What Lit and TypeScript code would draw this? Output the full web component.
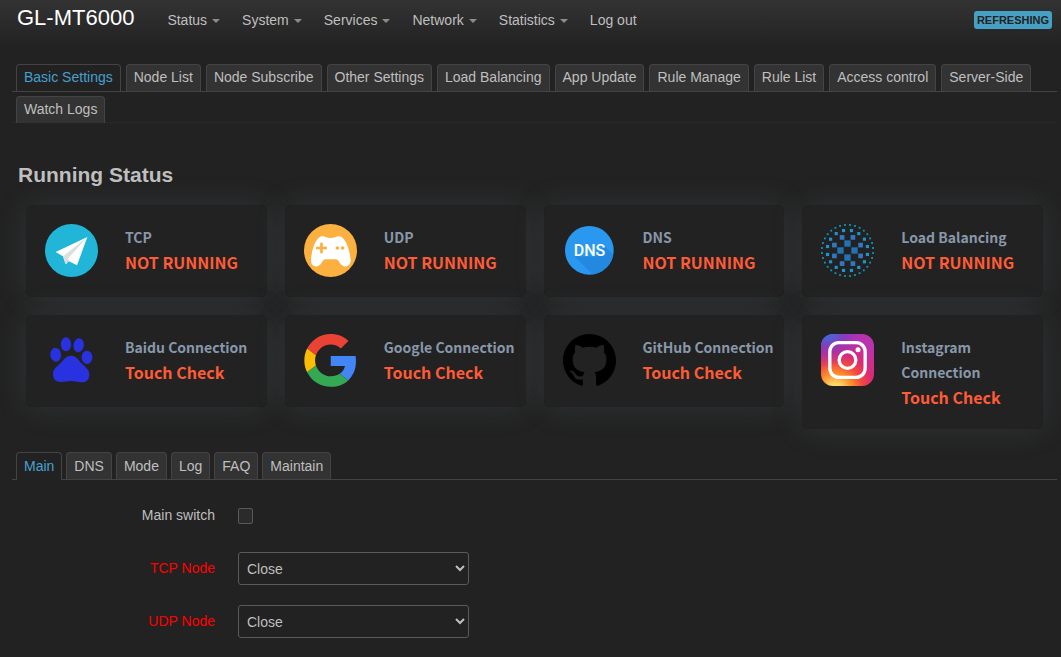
import { LitElement, html, svg, css } from "lit";
import { customElement, state } from "lit/decorators.js";
import { classMap } from "lit/directives/class-map.js";

interface NavItem { label: string; menu: boolean; }
interface StatusCard { name: string; value: string; icon: unknown; check?: boolean; }

const NAV: NavItem[] = [
  { label: "Status", menu: true },
  { label: "System", menu: true },
  { label: "Services", menu: true },
  { label: "Network", menu: true },
  { label: "Statistics", menu: true },
  { label: "Log out", menu: false },
];

const PAGES = [
  "Basic Settings", "Node List", "Node Subscribe", "Other Settings", "Load Balancing", "App Update",
  "Rule Manage", "Rule List", "Access control", "Server-Side", "Watch Logs",
];

const SECTIONS = ["Main", "DNS", "Mode", "Log", "FAQ", "Maintain"];

const plane = svg`
  <circle cx="79.5" cy="79.5" r="79.5" fill="#21b6d7"/>
  <path d="M127 39 32 84 54 97 62 121 72 112 96 124Z" fill="#fff"/>
  <path d="M127 39 54 97 62 121 69 104Z" fill="#dcdfe1"/>
  <path d="M69 104 62 121 72 112Z" fill="#c9cdd0"/>`;

const gamepad = svg`
  <circle cx="79.5" cy="79.5" r="79.5" fill="#fbb040"/>
  <path d="M52 37C62 35 67 42 80 42S98 35 108 37C128 43 138 85 140 108C141 130 118 134 107 116Q102 106 96 106H64Q58 106 53 116C42 134 20 130 21 108C22 85 32 43 52 37Z" fill="#fff"/>
  <path d="M36 72H69M52.500 56V88" stroke="#fbb040" stroke-width="8"/>
  <circle cx="100" cy="72" r="5.500" fill="#fbb040"/><circle cx="116" cy="72" r="5.500" fill="#fbb040"/>`;

const dns = svg`
  <defs><clipPath id="disc"><circle cx="79" cy="79" r="73"/></clipPath></defs>
  <circle cx="79" cy="79" r="73" fill="#2b98f0"/>
  <path d="M34 97 94 157H159V100L124 65 98 98Z" fill="#2389e0" clip-path="url(#disc)"/>
  <text class="glyph" x="79.500" y="97" text-anchor="middle">DNS</text>`;

/** Evenly spaced squares on a circle, shifted by half a step from the axes. */
function ring(count: number, radius: number, size: number, fill: string, shift = 0.5) {
  return Array.from({ length: count }, (_, i) => {
    const a = ((i + shift) * 2 * Math.PI) / count;
    return svg`<rect x=${79.5 + radius * Math.cos(a) - size / 2} y=${79.5 + radius * Math.sin(a) - size / 2}
      width=${size} height=${size} fill=${fill}/>`;
  });
}

const balance = svg`
  ${ring(4, 21, 19, "#2273b4", 0)}
  ${ring(8, 42.5, 14, "#2f78c4")}
  ${ring(16, 61, 9.5, "#1d94cf")}
  ${ring(32, 77, 5.5, "#1295b5")}`;

const paw = svg`<g transform="translate(-135 -102)" fill="#2932e1">
  <ellipse cx="198" cy="133" rx="15.500" ry="21"/>
  <ellipse cx="236" cy="136" rx="15.500" ry="21" transform="rotate(10 236 136)"/>
  <ellipse cx="167" cy="164" rx="16" ry="21" transform="rotate(-6 167 164)"/>
  <ellipse cx="261" cy="172" rx="16" ry="20"/>
  <path d="M213 167C225 167 233 175 240 185C250 197 268 205 268 224C268 240 257 248 243 247C231 246 225 243 213 243S195 246 182 246C168 246 159 238 159 222C159 206 174 198 184 187C192 177 200 167 213 167Z"/></g>`;

const google = svg`<g transform="translate(1) scale(3.3)">
  <path fill="#ea4335" d="M24 9.500c3.540 0 6.710 1.220 9.210 3.600l6.850-6.850C35.900 2.380 30.470 0 24 0 14.620 0 6.510 5.380 2.560 13.220l7.980 6.190C12.430 13.720 17.740 9.500 24 9.500z"/>
  <path fill="#4285f4" d="M46.980 24.550c0-1.570-.15-3.090-.38-4.550H24v9.020h12.940c-.58 2.960-2.260 5.480-4.780 7.180l7.730 6c4.510-4.180 7.090-10.360 7.090-17.650z"/>
  <path fill="#fbbc05" d="M10.530 28.590c-.48-1.450-.76-2.990-.76-4.590s.27-3.140.76-4.590l-7.980-6.190C.92 16.460 0 20.120 0 24c0 3.880.92 7.540 2.560 10.780l7.970-6.190z"/>
  <path fill="#34a853" d="M24 48c6.480 0 11.930-2.130 15.890-5.810l-7.730-6c-2.150 1.450-4.920 2.300-8.160 2.300-6.260 0-11.570-4.220-13.470-9.910l-7.980 6.190C6.510 42.620 14.620 48 24 48z"/></g>`;

const github = svg`<path fill="#000" transform="scale(9.94)" d="M8 0C3.580 0 0 3.580 0 8c0 3.540 2.290 6.530 5.470 7.590.4.070.55-.17.55-.38 0-.19-.01-.82-.01-1.490-2.010.37-2.530-.49-2.690-.94-.09-.23-.48-.94-.82-1.130-.28-.15-.68-.52-.01-.53.63-.01 1.080.58 1.230.82.72 1.210 1.870.87 2.330.66.07-.52.28-.87.51-1.070-1.780-.2-3.640-.89-3.640-3.950 0-.87.31-1.590.82-2.150-.08-.2-.36-1.020.08-2.120 0 0 .67-.21 2.200.82.64-.18 1.320-.27 2-.27.68 0 1.360.09 2 .27 1.530-1.040 2.200-.82 2.200-.82.44 1.100.16 1.920.08 2.120.51.56.82 1.270.82 2.150 0 3.070-1.870 3.750-3.650 3.950.29.25.54.73.54 1.480 0 1.070-.01 1.930-.01 2.200 0 .21.15.46.55.38A8.013 8.013 0 0016 8c0-4.420-3.580-8-8-8z"/>`;

const instagram = svg`
  <defs>
    <radialGradient id="warm" cx="0.27" cy="1.08" r="1.05">
      <stop offset="0" stop-color="#ffdf7e"/><stop offset="0.12" stop-color="#ffd766"/>
      <stop offset="0.32" stop-color="#fb8a2c"/><stop offset="0.5" stop-color="#f4473f"/>
      <stop offset="0.68" stop-color="#dc2a74"/><stop offset="1" stop-color="#b932b0"/>
    </radialGradient>
    <radialGradient id="cool" cx="0.1" cy="-0.1" r="0.75">
      <stop offset="0" stop-color="#3771e8"/><stop offset="0.2" stop-color="#4268d8"/>
      <stop offset="0.5" stop-color="#7a3cc4" stop-opacity="0.75"/>
      <stop offset="1" stop-color="#a030c0" stop-opacity="0"/>
    </radialGradient>
  </defs>
  <rect width="159" height="156" rx="36" fill="url(#warm)"/>
  <rect width="159" height="156" rx="36" fill="url(#cool)"/>
  <g fill="none" stroke="#fff" stroke-width="10">
    <rect x="26.500" y="26" width="106" height="104" rx="27"/>
    <circle cx="79.500" cy="78" r="25"/>
  </g>
  <circle cx="111" cy="47" r="7.500" fill="#fff"/>`;

const CARDS: StatusCard[] = [
  { name: "TCP", value: "NOT RUNNING", icon: plane },
  { name: "UDP", value: "NOT RUNNING", icon: gamepad },
  { name: "DNS", value: "NOT RUNNING", icon: dns },
  { name: "Load Balancing", value: "NOT RUNNING", icon: balance },
  { name: "Baidu Connection", value: "Touch Check", icon: paw, check: true },
  { name: "Google Connection", value: "Touch Check", icon: google, check: true },
  { name: "GitHub Connection", value: "Touch Check", icon: github, check: true },
  { name: "Instagram Connection", value: "Touch Check", icon: instagram, check: true },
];

@customElement("tab-strip")
class TabStrip extends LitElement {
  static properties = { items: { attribute: false }, active: {} };
  declare items: string[];
  declare active: string;

  static styles = css`
    :host { display: block; }
    .tabs {
      display: flex; flex-wrap: wrap; gap: 6px 5px; margin: 0; padding: 0 4px; list-style: none;
      background: linear-gradient(#444, #444) 0 27px / 100% 1px no-repeat;
      border-bottom: 1px solid #292929;
    }
    .tab { display: flex; margin-bottom: -1px; }
    .link {
      padding: 0 7px 2px; border: 1px solid #444; border-bottom: 0; border-radius: 4px 4px 0 0;
      background: #333; color: #bfbfbf; font-size: 14px; line-height: 24px; text-decoration: none;
    }
    .active { background: #222; color: #46a0cf; }
  `;

  render() {
    return html`<ul class="tabs">${this.items.map((t) => html`
      <li class="tab"><a href="#" class=${classMap({ link: true, active: t === this.active })}>${t}</a></li>`)}</ul>`;
  }
}

@customElement("section-tabs")
class SectionTabs extends LitElement {
  @state() private active = "Main";

  static styles = css`
    :host { display: block; }
    .tabs { display: flex; flex-wrap: wrap; gap: 4px; padding: 0 4px; border-bottom: 1px solid #444; }
    .tab {
      box-sizing: border-box; height: 27px; padding: 0 7px; border: 1px solid #444; border-bottom: 0;
      border-radius: 4px 4px 0 0; background: #333; color: #bfbfbf;
      font: 14px/26px "Liberation Sans", Arial, sans-serif; cursor: pointer;
    }
    .active { height: 28px; margin-bottom: -1px; padding-bottom: 1px; background: #222; color: #46a0cf; }
  `;

  render() {
    return html`<div class="tabs" role="tablist">${SECTIONS.map((t) => html`
      <button type="button" role="tab" aria-selected=${t === this.active ? "true" : "false"}
        class=${classMap({ tab: true, active: t === this.active })}
        @click=${() => (this.active = t)}>${t}</button>`)}</div>`;
  }
}

@customElement("app-root")
class AppRoot extends LitElement {
  static styles = css`
    :host {
      display: block; min-height: 100vh; background: #222; color: #bfbfbf;
      font: 14px/20px "Liberation Sans", Arial, sans-serif;
    }
    .header {
      display: flex; align-items: flex-start; height: 64px; padding: 0 9px 0 17px; box-sizing: border-box;
      background: linear-gradient(#333, #222 46px);
    }
    .menu { display: flex; align-items: baseline; flex: 1; padding-top: 6px; }
    .brand { margin-right: 33px; color: #fff; font-size: 22px; line-height: 24px; text-decoration: none; }
    .nav { display: flex; gap: 22px; margin: 0; padding: 0; list-style: none; }
    .nav-link { display: flex; align-items: center; gap: 5px; color: #bfbfbf; text-decoration: none; }
    .caret { border: 4px solid transparent; border-top-color: #8c8c8c; border-bottom: 0; margin-top: 2px; }
    .badge {
      margin-top: 11px; padding: 0 3px; border: 0; border-radius: 3px; background: #46a0c3; color: #222;
      font: bold 11px/18px "Liberation Sans", Arial, sans-serif;
    }
    .content { padding: 0 4px 0 12px; }
    .title { margin: 40px 0 18px; padding-left: 6px; font-size: 21px; line-height: 24px; }
    .cards {
      display: grid; grid-template-columns: repeat(4, 1fr); gap: 18px; align-items: start;
      padding: 0 14px;
    }
    .card {
      display: flex; gap: 27px; padding: 19px 8px 19px 19px; border-radius: 6px; min-height: 54px;
      background: #222;
      box-shadow: 0 0 32px rgba(136, 152, 170, 0.15), inset 0 0 1px rgba(0, 0, 0, 0.3);
    }
    .icon { flex: none; width: 53px; height: 53px; }
    .glyph { fill: #fff; font: 500 48px Roboto, sans-serif; }
    .info { padding-top: 1px; font-family: "Noto Sans CJK SC", sans-serif; font-weight: 700; line-height: 25px; }
    .name { margin: 0; color: #8898aa; font-size: 14px; font-weight: 700; line-height: 25px; }
    .value { display: block; padding: 0; border: 0; background: none; color: #ff5b36; font: inherit; font-size: 16px; text-align: left; }
    .sections { display: block; margin-top: 23px; }
    .form { display: grid; grid-template-columns: 203px 231px; column-gap: 23px; row-gap: 20px; padding: 19px 0; align-items: center; }
    .label { text-align: right; line-height: 33px; }
    .node { color: #f00; }
    .check {
      appearance: none; width: 15px; height: 16px; margin: 0; border: 1px solid #5a5a5a; border-radius: 2px;
      background: #2b2b2b;
    }
    .select {
      width: 100%; height: 33px; padding: 0 4px; border: 1px solid #5a5a5a; border-radius: 3px;
      background: #222; color: #bfbfbf; font: inherit;
    }
  `;

  private card(c: StatusCard) {
    return html`<article class="card">
      <svg class="icon" viewBox="0 0 159 159" aria-hidden="true">${c.icon}</svg>
      <div class="info">
        <h4 class="name">${c.name}</h4>
        ${c.check
          ? html`<button type="button" class="value">${c.value}</button>`
          : html`<span class="value">${c.value}</span>`}
      </div>
    </article>`;
  }

  render() {
    return html`
      <header class="header">
        <div class="menu">
          <a class="brand" href="#">GL-MT6000</a>
          <ul class="nav">${NAV.map((n) => html`
            <li><a class="nav-link" href="#">${n.label}${n.menu ? html`<span class="caret"></span>` : ""}</a></li>`)}
          </ul>
        </div>
        <button type="button" class="badge">REFRESHING</button>
      </header>
      <main class="content">
        <tab-strip .items=${PAGES} active="Basic Settings"></tab-strip>
        <h2 class="title">Running Status</h2>
        <section class="cards">${CARDS.map((c) => this.card(c))}</section>
        <section-tabs class="sections"></section-tabs>
        <form class="form">
          <label class="label" for="main-switch">Main switch</label>
          <input class="check" id="main-switch" type="checkbox">
          <label class="label node" for="tcp-node">TCP Node</label>
          <select class="select" id="tcp-node"><option>Close</option></select>
          <label class="label node" for="udp-node">UDP Node</label>
          <select class="select" id="udp-node"><option>Close</option></select>
        </form>
      </main>`;
  }
}
